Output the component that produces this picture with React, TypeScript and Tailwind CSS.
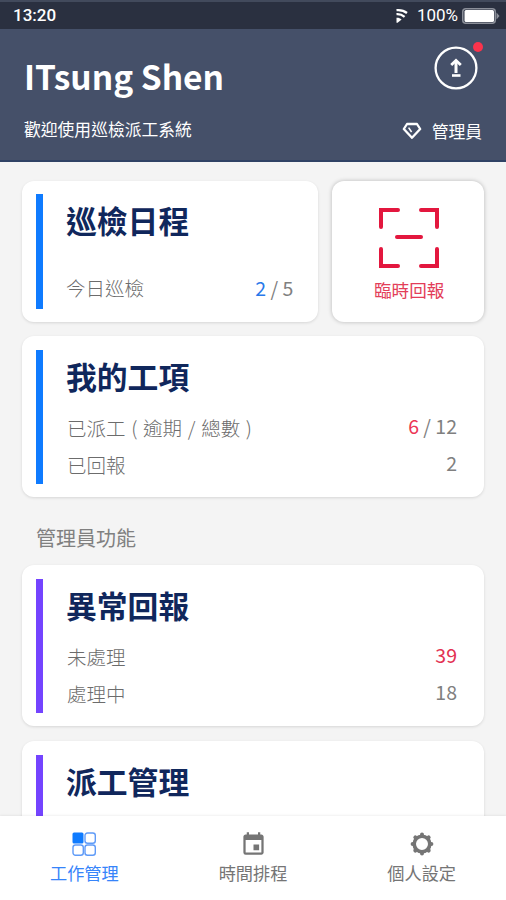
import type { ReactNode } from 'react'
import { MdEvent } from 'react-icons/md'

type Row = {
    label: string
    value: string
    highlight?: string
    color?: string
}

const Battery = () => (
    <svg width="38" height="16" viewBox="0 0 38 16" aria-hidden="true">
        <rect x="0.75" y="0.75" width="32.5" height="14.5" rx="3" fill="none" stroke="#8b8f99" strokeWidth="1.5" />
        <rect x="2.5" y="2" width="29.5" height="12" rx="1.5" fill="#fff" />
        <path d="M34.5 4.5 L37.5 8 L34.5 11.5 Z" fill="#8b8f99" />
    </svg>
)

const Wifi = () => (
    <svg width="12" height="16" viewBox="0 0 12 16" fill="none" stroke="#fff" strokeWidth="2.3" aria-hidden="true">
        <path d="M0.5 2.2 C4.5 1.8 8 2.6 11 5" />
        <path d="M0.5 6.2 C3.4 5.9 6 6.7 8.6 8.8" />
        <path d="M0.5 9.8 C2.5 9.6 4 10.2 5.6 11.4 L1.6 14.8 H0.5 Z" fill="#fff" stroke="none" />
    </svg>
)

const Upload = () => (
    <svg width="44" height="44" viewBox="0 0 44 44" fill="none" stroke="#fff" aria-hidden="true">
        <circle cx="22" cy="22" r="20.4" strokeWidth="2.3" />
        <path d="M22 27 V15" strokeWidth="3" />
        <path d="M17.2 19 L22 14.4 L26.8 19" strokeWidth="2.8" />
        <path d="M18 29.5 H26.5" strokeWidth="2.6" />
    </svg>
)

const Diamond = () => (
    <svg width="20" height="18" viewBox="0 0 20 18" fill="none" stroke="#fff" strokeLinejoin="round" aria-hidden="true">
        <path d="M5 2 H15 L18.2 7 L10 15.8 L1.8 7 Z" strokeWidth="2.3" />
        <path d="M6.6 5.6 L9.6 10" strokeWidth="1.6" />
    </svg>
)

const Scan = () => (
    <svg width="62" height="62" viewBox="0 0 62 62" fill="none" stroke="#e3173e" strokeWidth="4" strokeLinecap="round" aria-hidden="true">
        <path d="M3 20 V3 H20" />
        <path d="M43 3 H59 V20" />
        <path d="M3 42 V59 H20" />
        <path d="M43 59 H59 V42" />
        <path d="M19 30 H43" />
    </svg>
)

const Grid = () => (
    <svg width="24" height="24" viewBox="0 0 24 24" fill="none" stroke="#5f9bf8" strokeWidth="1.4" aria-hidden="true">
        <rect x="0.5" y="0.5" width="11" height="11" rx="1.5" fill="#0f7bff" stroke="none" />
        <rect x="13" y="1" width="10.3" height="10.3" rx="2.5" />
        <rect x="1" y="13" width="10.3" height="10.3" rx="2.5" />
        <rect x="13" y="13" width="10.3" height="10.3" rx="2.5" />
    </svg>
)

const Gear = () => (
    <svg width="24" height="24" viewBox="0 0 24 24" fill="#757575" aria-hidden="true">
        <circle cx="12" cy="12" r="7.8" fill="none" stroke="#757575" strokeWidth="3.6" />
        {[0, 45, 90, 135, 180, 225, 270, 315].map((angle) => (
            <circle key={angle} cx="12" cy="2.6" r="2" transform={`rotate(${angle} 12 12)`} />
        ))}
    </svg>
)

const TaskCard = ({ title, rows, bar }: { title: string; rows: Row[]; bar: string }) => (
    <section className="flex h-[161px] shrink-0 rounded-xl bg-white pt-3.5 pl-3.5 pr-[27px] shadow-[0_1px_3px_rgba(0,0,0,0.12)]">
        <div className={`h-[134px] w-[7px] shrink-0 ${bar}`}></div>
        <div className="ml-[23px] flex-1">
            <h2 className="h-[57px] text-[30.8px] leading-[52px] font-bold text-[#10275c]">{title}</h2>
            {rows.map((row) => (
                <div key={row.label} className="flex h-[37px] items-center justify-between pl-px text-[19.5px] text-[#808080]">
                    <span className="pt-1 font-light text-[#6c6c6c] [word-spacing:1.4px]">{row.label}</span>
                    <span>
                        {row.highlight && <span className={row.color}>{row.highlight}</span>}
                        {row.value}
                    </span>
                </div>
            ))}
        </div>
    </section>
)

const Tab = ({ icon, label, active }: { icon: ReactNode; label: string; active?: boolean }) => (
    <button
        type="button"
        className={`flex flex-1 flex-col items-center pt-4 text-[17.2px] leading-6 ${active ? 'text-[#3684fa]' : 'text-[#757575]'}`}
    >
        <span className="flex h-6 items-center justify-center">{icon}</span>
        <span className="mt-[5px]">{label}</span>
    </button>
)

const App = () => {
    return (
        <div className="flex h-[900px] w-[506px] flex-col overflow-hidden bg-[#f4f4f4] font-['Noto_Sans_CJK_TC',sans-serif]">
            <div className="flex h-[29px] shrink-0 items-center justify-between border-t-2 border-[#424a5c] bg-[#2a3040] pl-[13px] pr-[6px] font-['Roboto',sans-serif] text-[17px] text-white">
                <span className="font-medium">13:20</span>
                <div className="flex items-center">
                    <Wifi />
                    <span className="mr-1 ml-[9px]">100%</span>
                    <Battery />
                </div>
            </div>

            <header className="flex h-[133px] shrink-0 justify-between border-b-2 border-[#304265] bg-[#455069] pl-6 pr-6 text-white">
                <div>
                    <h1 className="mt-[25px] text-[33.5px] leading-[44px] font-bold">ITsung Shen</h1>
                    <p className="mt-[19px] text-[16.8px] leading-6">歡迎使用巡檢派工系統</p>
                </div>
                <div className="flex flex-col items-end">
                    <div className="relative mt-[17px] mr-1">
                        <Upload />
                        <span className="absolute -top-1 -right-[5px] h-2.5 w-2.5 rounded-full bg-[#fa334c]"></span>
                    </div>
                    <div className="mt-[29px] flex items-center gap-[10px] text-[16.8px] leading-6">
                        <Diamond />
                        <span>管理員</span>
                    </div>
                </div>
            </header>

            <main className="flex min-h-0 flex-1 flex-col overflow-hidden px-[22px] pt-[19px]">
                <div className="flex shrink-0 gap-[14px]">
                    <section className="flex h-[141px] w-[297px] rounded-xl bg-white pt-[13px] pl-3.5 pr-[25px] shadow-[0_1px_3px_rgba(0,0,0,0.12)]">
                        <div className="h-[115px] w-[7px] bg-[#0f7bff]"></div>
                        <div className="ml-[23px] flex-1">
                            <h2 className="text-[30.8px] leading-[52px] font-bold text-[#10275c]">巡檢日程</h2>
                            <div className="mt-[27px] flex items-center justify-between text-[19.5px] text-[#808080]">
                                <span className="font-light text-[#6c6c6c]">今日巡檢</span>
                                <span>
                                    <span className="text-[#2979ea]">2</span> / 5
                                </span>
                            </div>
                        </div>
                    </section>
                    <button type="button" className="flex h-[141px] w-[152px] flex-col items-center rounded-xl bg-white pt-[26px] pl-0.5 shadow-[0_0_4px_rgba(0,0,0,0.25)]">
                        <Scan />
                        <span className="mt-[7px] text-[17.6px] leading-7 text-[#e33e59]">臨時回報</span>
                    </button>
                </div>

                <div className="mt-[14px] flex flex-col">
                    <TaskCard
                        title="我的工項"
                        bar="bg-[#0f7bff]"
                        rows={[
                            { label: '已派工 ( 逾期 / 總數 )', value: ' / 12', highlight: '6', color: 'text-[#ec3455]' },
                            { label: '已回報', value: '2' },
                        ]}
                    />
                    <p className="mt-[33px] mb-[19px] ml-3.5 text-[20px] leading-4 text-[#808080]">管理員功能</p>
                    <TaskCard
                        title="異常回報"
                        bar="bg-[#7444ff]"
                        rows={[
                            { label: '未處理', value: '', highlight: '39', color: 'text-[#e33152]' },
                            { label: '處理中', value: '18' },
                        ]}
                    />
                    <div className="h-[15px]"></div>
                    <TaskCard title="派工管理" bar="bg-[#7444ff]" rows={[]} />
                </div>
            </main>

            <nav className="flex h-[84px] shrink-0 bg-white shadow-[0_-1px_2px_rgba(0,0,0,0.06)]">
                <Tab icon={<Grid />} label="工作管理" active />
                <Tab icon={<MdEvent size={27} />} label="時間排程" />
                <Tab icon={<Gear />} label="個人設定" />
            </nav>
        </div>
    )
}
export default App
